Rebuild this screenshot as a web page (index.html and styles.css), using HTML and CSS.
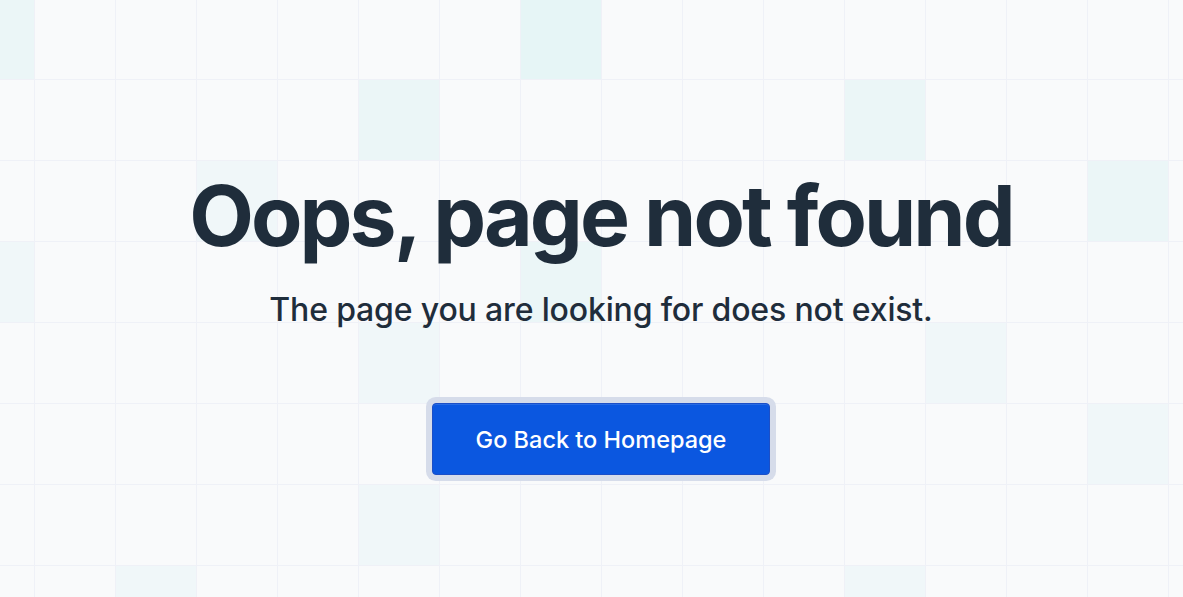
FILE: index.html
```html
<!DOCTYPE html>
<html lang="en">
<head>
  <meta charset="utf-8">
  <title>Page not found</title>
  <link rel="stylesheet" href="styles.css">
</head>
<body>
  <div class="backdrop" aria-hidden="true">
    <div class="grid">
      <div class="cell tint-a"></div><div class="cell"></div><div class="cell"></div><div class="cell"></div><div class="cell"></div><div class="cell"></div><div class="cell"></div><div class="cell tint-b"></div><div class="cell"></div><div class="cell"></div><div class="cell"></div><div class="cell"></div><div class="cell"></div><div class="cell"></div><div class="cell"></div><div class="cell"></div>
      <div class="cell"></div><div class="cell"></div><div class="cell"></div><div class="cell"></div><div class="cell"></div><div class="cell tint-a"></div><div class="cell"></div><div class="cell"></div><div class="cell"></div><div class="cell"></div><div class="cell"></div><div class="cell tint-a"></div><div class="cell"></div><div class="cell"></div><div class="cell"></div><div class="cell"></div>
      <div class="cell"></div><div class="cell"></div><div class="cell"></div><div class="cell tint-c"></div><div class="cell"></div><div class="cell"></div><div class="cell"></div><div class="cell"></div><div class="cell"></div><div class="cell"></div><div class="cell"></div><div class="cell"></div><div class="cell"></div><div class="cell"></div><div class="cell tint-a"></div><div class="cell"></div>
      <div class="cell tint-c"></div><div class="cell"></div><div class="cell"></div><div class="cell"></div><div class="cell"></div><div class="cell"></div><div class="cell"></div><div class="cell tint-a"></div><div class="cell"></div><div class="cell"></div><div class="cell"></div><div class="cell"></div><div class="cell"></div><div class="cell"></div><div class="cell"></div><div class="cell"></div>
      <div class="cell"></div><div class="cell"></div><div class="cell"></div><div class="cell"></div><div class="cell"></div><div class="cell tint-c"></div><div class="cell"></div><div class="cell"></div><div class="cell"></div><div class="cell"></div><div class="cell"></div><div class="cell"></div><div class="cell tint-c"></div><div class="cell"></div><div class="cell"></div><div class="cell"></div>
      <div class="cell"></div><div class="cell"></div><div class="cell"></div><div class="cell"></div><div class="cell"></div><div class="cell"></div><div class="cell"></div><div class="cell"></div><div class="cell"></div><div class="cell"></div><div class="cell"></div><div class="cell"></div><div class="cell"></div><div class="cell"></div><div class="cell tint-c"></div><div class="cell"></div>
      <div class="cell"></div><div class="cell"></div><div class="cell"></div><div class="cell"></div><div class="cell"></div><div class="cell tint-c"></div><div class="cell"></div><div class="cell"></div><div class="cell"></div><div class="cell"></div><div class="cell"></div><div class="cell"></div><div class="cell"></div><div class="cell"></div><div class="cell"></div><div class="cell"></div>
      <div class="cell"></div><div class="cell"></div><div class="cell tint-c"></div><div class="cell"></div><div class="cell"></div><div class="cell"></div><div class="cell"></div><div class="cell"></div><div class="cell"></div><div class="cell"></div><div class="cell"></div><div class="cell tint-c"></div><div class="cell"></div><div class="cell"></div><div class="cell"></div><div class="cell"></div>
    </div>
  </div>

  <main class="notfound">
    <h1 class="title">Oops, page not found</h1>
    <p class="lead">The page you are looking for does not exist.</p>
    <a class="btn" href="#">Go Back to Homepage</a>
  </main>
</body>
</html>
```

FILE: styles.css
```css
html, body { margin: 0; height: 100%; }
body { background: #f9fafb; font-family: Inter, "Noto Sans", sans-serif; color: #1f2d3b; overflow: hidden; position: relative; }

/* background tiles */
.backdrop { position: absolute; inset: 0; overflow: hidden; z-index: 0; }
.grid { margin: -1px 0 0 -46px; display: grid; grid-template-columns: repeat(16, 80px); grid-auto-rows: 80px; gap: 1px; width: max-content; background: #eff1f7; }
.cell { background: #f9fafb; }
.tint-a { background: #ebf6f7; }
.tint-b { background: #e6f5f6; }
.tint-c { background: #f0f7f9; }

.notfound { position: relative; z-index: 1; display: flex; flex-direction: column; align-items: center; padding: 174px 0 0 19px; }
.title { margin: 0; font-size: 84px; font-weight: 700; line-height: 1; letter-spacing: -0.035em; }
.lead { margin: 33px 0 0; font-size: 32px; font-weight: 500; line-height: 1.2; letter-spacing: -0.005em; }
.btn { margin-top: 74px; display: flex; align-items: center; justify-content: center; width: 338px; height: 72px; box-sizing: border-box; background: #0b57e0; border: 1px solid #1c4fc7; border-radius: 4px; color: #fff; font-size: 23.5px; font-weight: 500; text-decoration: none; box-shadow: 0 0 0 6px #d6dcea, inset 0 1px 0 rgba(255,255,255,0.12); }
```
